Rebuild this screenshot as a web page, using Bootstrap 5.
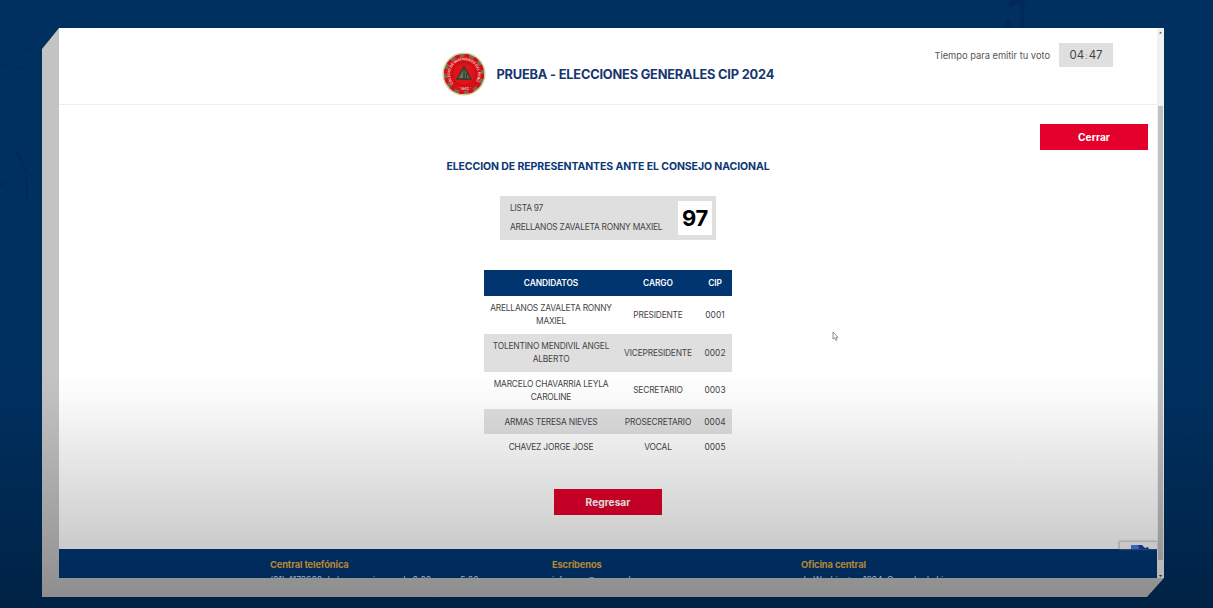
<!DOCTYPE html>
<html lang="es">
<head>
<meta charset="utf-8">
<meta name="viewport" content="width=device-width, initial-scale=1">
<title>Elecciones Generales CIP 2024</title>
<link href="https://cdn.jsdelivr.net/npm/bootstrap@5.3.0/dist/css/bootstrap.min.css" rel="stylesheet">
<style>
  :root { --navy: #00356f; --red: #e4002b; }
  body { font-family: "Inter", "Liberation Sans", sans-serif; background: #003060; color: #444; font-size: 8.5px; line-height: 13px; height: 608px; }
  .backdrop { top: 0; left: 0; }
  .slab { margin: 28px 49px 0 42px; padding: 0 0 19px 17px; background: #c3c3c3; clip-path: polygon(17px 0, 100% 0, 100% 550px, 1105px 100%, 0 100%, 0 21px); }
  .screen { height: 550px; background: #fff; }
  .topbar { height: 77px; border-bottom: 1px solid #ececec; padding-top: 15px; }
  .brand-title { color: #17356f; font-size: 12.8px; font-weight: 700; line-height: 20px; letter-spacing: -.19px; width: 279px; padding-top: 1px; white-space: nowrap; }
  .timer { top: 15px; right: 44px; font-size: 9.3px; color: #555; }
  .clock { width: 54px; height: 24px; background: #dfdfdf; font-size: 11.5px; color: #444; }
  .btn-cip { --bs-btn-color: #fff; --bs-btn-bg: var(--red); --bs-btn-hover-color: #fff; --bs-btn-hover-bg: #c00024; width: 108px; height: 26px; padding: 0; border: 0; font-size: 10.2px; font-weight: 700; line-height: 26px; }
  .ballot-title { color: #0c3674; font-size: 10.5px; font-weight: 700; line-height: 16px; letter-spacing: -.09px; margin: 9px 0 21px; }
  .list-box { width: 216px; height: 44px; background: #dfdfdf; padding: 0 4px 0 10px; line-height: 19px; font-size: 8.4px; letter-spacing: -.23px; }
  .list-number { width: 34px; height: 34px; background: #fff; color: #000; font-size: 22px; font-weight: 700; }
  .candidates { width: 248px; margin: 30px 0; table-layout: fixed; font-size: 8.4px; letter-spacing: -.18px; text-align: center; }
  .candidates > :not(caption) > * > * { padding: 6px 5px; border: 0; vertical-align: middle; color: #444; background: transparent; }
  .candidates > thead > tr > th { background: var(--navy); color: #fff; font-weight: 600; padding-block: 6.5px; letter-spacing: -.05px; }
  .candidates > tbody > tr > td { padding-block: 6.4px 5.4px; white-space: nowrap; }
  .candidates > tbody > tr > td + td { padding-inline: 0; }
  .candidates > tbody > tr > td:last-child { letter-spacing: .05px; }
  .candidates > tbody > tr:nth-child(even) > td { background: #dfdfdf; }
  .footbar { height: 60px; background: #003878; color: #dce6f2; }
  .footbar h6 { font-size: 9.3px; font-weight: 700; line-height: 14px; letter-spacing: -.12px; color: #e5ae45; margin: 8.5px 0 2.5px; }
  .captcha { right: 0; top: -8px; width: 38px; height: 8px; border: 1px solid #d5d5d5; border-width: 1px 0 0 1px; background: #fafafa; box-shadow: 0 0 2px #aaa; overflow: hidden; }
  .scroller { width: 7px; background: #f1f1f1; }
  .thumb { width: 5px; height: 454px; background: #c1c1c1; }
  .pointer { left: 832px; top: 331px; }
  .shade { inset: 0; pointer-events: none; background: linear-gradient(transparent 370px, rgba(0,0,0,.025) 400px, rgba(0,0,0,.2) 545px, rgba(0,0,0,.29) 608px); }
</style>
</head>
<body class="position-relative overflow-hidden">
<svg class="backdrop position-absolute" width="1213" height="608" fill="none" stroke="#00265a" aria-hidden="true">
  <g opacity=".75"><path d="M1009 5l23-9" stroke-width="5"/><path d="M1022 0v27" stroke-width="5" opacity=".7"/><path d="M1008 19v8" stroke-width="5"/><path d="M15 150q8 12 12 24M26 178l1 22M0 186l8-6" stroke-width="1.5"/><path d="M94 2L77 26M0 64q20 6 40 3M18 51l18-3" opacity=".5"/><path d="M1105 20l9-16M1187 30l8-18M1170 430l40 20M1175 170l35-30M435 598l-6 10" opacity=".5"/></g>
</svg>

<div class="slab position-relative">
  <div class="screen d-flex overflow-hidden">
    <div class="flex-grow-1 d-flex flex-column">
      <header class="topbar position-relative flex-shrink-0">
        <div class="d-flex justify-content-center align-items-center" style="padding-top:8px">
          <svg style="margin-right:7px" width="46" height="46" viewBox="0 0 46 46">
            <defs><path id="ring" d="M12.600 32.500A14 14 0 1 1 33.400 32.500"/><path id="ringlow" d="M13 36Q23 42 33 36"/></defs>
            <circle cx="23" cy="23" r="20.800" fill="#7d6a45" stroke="#d9cba6" stroke-width="1.500"/>
            <circle cx="23" cy="23" r="17" fill="#d50f18"/>
            <circle cx="23" cy="23" r="18.300" fill="none" stroke="#d50f18" stroke-width="3.600" stroke-dasharray="4.790 4.790"/>
            <circle cx="23" cy="23" r="11.500" fill="#e01318" stroke="#b50e16" stroke-width=".7"/>
            <g fill="#f6ccc5" font-size="3.500" font-weight="700"><text><textPath href="#ring" textLength="61">COLEGIO DE INGENIEROS DEL PERU</textPath></text><text letter-spacing=".3"><textPath href="#ringlow" startOffset="4">· 1962 ·</textPath></text></g>
            <path d="M23 15.500L29.800 28H16.200z" fill="#6d7055" stroke="#2f3b30" stroke-width="1.500"/>
            <path d="M23 18v10M25.500 22v6" stroke="#273c35" stroke-width="1.300"/>
          </svg>
          <h1 class="brand-title mb-0" style="margin-left:3px">PRUEBA - ELECCIONES GENERALES CIP 2024</h1>
        </div>
        <div class="timer position-absolute d-flex align-items-center">
          <span>Tiempo para emitir tu voto</span>
          <span class="clock d-flex align-items-center justify-content-center" style="margin-left:9px"><span>04</span><span class="opacity-50" style="font-size:9px;padding:0 1px">:</span><span>47</span></span>
        </div>
      </header>

      <main class="d-flex flex-column align-items-center flex-shrink-0" style="height:444px;padding-top:19px">
        <button class="btn btn-cip rounded-0 align-self-end" style="margin-right:9px">Cerrar</button>
        <h2 class="ballot-title">ELECCION DE REPRESENTANTES ANTE EL CONSEJO NACIONAL</h2>
        <section class="list-box d-flex align-items-center justify-content-between flex-shrink-0">
          <div><div>LISTA 97</div><div>ARELLANOS ZAVALETA RONNY MAXIEL</div></div>
          <div class="list-number d-flex align-items-center justify-content-center">97</div>
        </section>
        <table class="table candidates">
          <colgroup><col style="width:134px"><col style="width:80px"><col style="width:34px"></colgroup>
          <thead><tr><th>CANDIDATOS</th><th>CARGO</th><th>CIP</th></tr></thead>
          <tbody>
            <tr><td>ARELLANOS ZAVALETA RONNY<br>MAXIEL</td><td>PRESIDENTE</td><td>0001</td></tr>
            <tr><td>TOLENTINO MENDIVIL ANGEL<br>ALBERTO</td><td>VICEPRESIDENTE</td><td>0002</td></tr>
            <tr><td>MARCELO CHAVARRIA LEYLA<br>CAROLINE</td><td>SECRETARIO</td><td>0003</td></tr>
            <tr><td>ARMAS TERESA NIEVES</td><td>PROSECRETARIO</td><td>0004</td></tr>
            <tr><td>CHAVEZ JORGE JOSE</td><td>VOCAL</td><td>0005</td></tr>
          </tbody>
        </table>
        <button class="btn btn-cip rounded-0">Regresar</button>
      </main>

      <footer class="footbar position-relative d-flex flex-shrink-0" style="padding-left:211px">
        <div style="width:282px"><h6>Central telefónica</h6><div>(01) 4173600 de lunes a viernes de 9:00 a.m. a 5:00 p.m.</div></div>
        <div style="width:249px"><h6>Escríbenos</h6><div>informes@onpe.gob.pe</div></div>
        <div><h6>Oficina central</h6><div>Jr. Washington 1894, Cercado de Lima</div></div>
        <div class="captcha position-absolute"><svg class="d-block" width="38" height="8"><path d="M11 3h8l3 5H11z" fill="#4a7fe0"/><path d="M18 3h4l3 3 3-1 2 4H20z" fill="#1c3fa8"/></svg></div>
      </footer>
    </div>
    <div class="scroller d-flex flex-column justify-content-between align-items-center flex-shrink-0">
      <svg width="7" height="78"><path d="M2 5.500l1.500-2 1.500 2z" fill="#555"/></svg>
      <div class="thumb"></div>
      <svg width="7" height="18"><path d="M2 15l1.500 2 1.500-2z" fill="#333"/></svg>
    </div>
  </div>
</div>

<svg class="pointer position-absolute" width="8" height="12"><path d="M1 1v7l1.600-1.300 1.200 2.600 1.200-.6-1.100-2.400H6z" fill="#fff" stroke="#777" stroke-width=".8"/></svg>
<div class="shade position-absolute"></div>
<script src="https://cdn.jsdelivr.net/npm/bootstrap@5.3.0/dist/js/bootstrap.bundle.min.js"></script>
</body>
</html>
